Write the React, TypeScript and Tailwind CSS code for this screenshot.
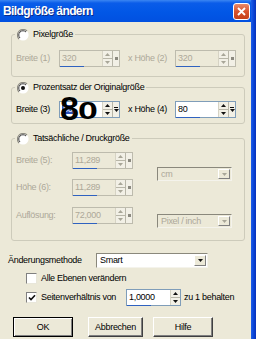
import React from "react";

const txt = "[font-family:'Liberation_Sans',Arial,sans-serif] text-[9px] tracking-[-0.3px] leading-none";

function Radio({ checked }: { checked?: boolean }) {
  return (
    <svg width="12" height="12" viewBox="0 0 12 12" className="shrink-0">
      <circle cx="6" cy="6" r="5.6" fill="#fff" />
      <path d="M2 10 A5.66 5.66 0 0 1 10 2" stroke="#8c8a80" strokeWidth="1.2" fill="none" />
      <path d="M3 9 A4.24 4.24 0 0 1 9 3" stroke="#3c3c3c" strokeWidth="1" fill="none" />
      {checked && <circle cx="6" cy="6" r="2" fill="#111" />}
    </svg>
  );
}

function Check({ checked }: { checked?: boolean }) {
  return (
    <div className="w-[11px] h-[11px] shrink-0 bg-white border border-t-[#808080] border-l-[#808080] border-r-[#e8e6da] border-b-[#e8e6da] flex items-center justify-center">
      {checked && (
        <svg width="8" height="8" viewBox="0 0 8 8">
          <path d="M1 3.5 L3 5.6 L7 1.2" stroke="#111" strokeWidth="1.6" fill="none" />
        </svg>
      )}
    </div>
  );
}

function Arrow({ up, dim }: { up?: boolean; dim?: boolean }) {
  return (
    <svg width="5" height="3" viewBox="0 0 5 3">
      <path d={up ? "M0 3 L2.5 0 L5 3 Z" : "M0 0 L2.5 3 L5 0 Z"} fill={dim ? "#a8a698" : "#111"} />
    </svg>
  );
}

function SpinBox({
  value,
  disabled,
  className,
  extra = true,
  selected,
}: {
  value: string;
  disabled?: boolean;
  className: string;
  extra?: boolean;
  selected?: boolean;
}) {
  return (
    <div
      className={`flex h-[17px] shrink-0 border ${
        disabled ? "border-[#bdbbad] bg-[#ECE9D8]" : "border-[#7F9DB9] bg-white"
      } ${className}`}
    >
      <div className="relative flex-1 flex items-center pl-[2px]">
        {selected ? (
          <span className="bg-[#2e4fb8] text-white px-[1px]">{value}</span>
        ) : (
          <span className={disabled ? "text-[#ACA899]" : "text-black"}>{value}</span>
        )}
        <div className="absolute bottom-[-1px] left-0 h-[1px] w-[56%] bg-[#2f62c0]" />
      </div>
      <div className="w-[10px] flex flex-col border-l border-[#d6d3c4]">
        <div className="flex-1 flex items-center justify-center bg-[#f2f0e6] border-b border-[#b8b6a8]">
          <Arrow up dim={disabled} />
        </div>
        <div className="flex-1 flex items-center justify-center bg-[#f2f0e6]">
          <Arrow dim={disabled} />
        </div>
      </div>
      {extra && (
        <div className="w-[7px] flex flex-col items-center justify-center gap-[1px] bg-[#f2f0e6] border-l border-[#b8b6a8]">
          {disabled ? (
            <div className="w-[3px] h-[3px] bg-[#8c8a80]" />
          ) : (
            <>
              <div className="w-[4px] h-[1px] bg-[#111]" />
              <Arrow />
            </>
          )}
        </div>
      )}
    </div>
  );
}

function Combo({
  value,
  disabled,
  className,
}: {
  value: string;
  disabled?: boolean;
  className: string;
}) {
  return (
    <div
      className={`flex shrink-0 border border-t-[#8a887c] border-l-[#8a887c] border-r-[#f4f3ec] border-b-[#f4f3ec] ${
        disabled ? "bg-[#ECE9D8]" : "bg-white"
      } ${className}`}
    >
      <div className={`flex-1 flex items-center pl-[3px] ${disabled ? "text-[#ACA899]" : "text-black"}`}>
        {value}
      </div>
      <div className="w-[12px] m-[1px] flex items-center justify-center bg-[#ECE9D8] border border-t-[#fff] border-l-[#fff] border-r-[#808080] border-b-[#808080]">
        <Arrow dim={disabled} />
      </div>
    </div>
  );
}

function Group({
  label,
  checked,
  children,
  className,
}: {
  label: string;
  checked?: boolean;
  children: React.ReactNode;
  className: string;
}) {
  return (
    <div className={`relative border border-[#cdcbbb] rounded-[3px] pl-[4px] ${className}`}>
      <div className="absolute left-[3px] top-[-7px] h-[13px] px-[2px] flex items-center gap-[4px] bg-[#ECE9D8] text-black">
        <Radio checked={checked} />
        <span>{label}</span>
      </div>
      {children}
    </div>
  );
}

function Button({ label, def, className }: { label: string; def?: boolean; className: string }) {
  return (
    <div
      className={`h-[20px] flex items-center justify-center bg-[#ECE9D8] text-black ${
        def
          ? "border border-black shadow-[inset_1px_1px_0_#fff,inset_-1px_-1px_0_#808080]"
          : "border border-t-[#fff] border-l-[#fff] border-r-[#404040] border-b-[#404040] shadow-[inset_-1px_-1px_0_#808080]"
      } ${className}`}
    >
      {label}
    </div>
  );
}

export default function App() {
  return (
    <div className={`w-[256px] h-[339px] flex overflow-hidden bg-[#ECE9D8] ${txt}`}>
      <div className="flex-1 flex flex-col">
        <div className="h-[22px] shrink-0 flex items-center justify-between pl-[3px] pr-[1px] bg-[linear-gradient(180deg,#3b86f2_0%,#0a5ce9_14%,#0157e6_55%,#0150e0_100%)]">
          <span className="text-white font-bold text-[12px] tracking-[-0.6px] [text-shadow:1px_1px_0_#0a2a8a]">
            Bildgröße ändern
          </span>
          <div className="w-[17px] h-[17px] rounded-[3px] border border-white bg-[linear-gradient(180deg,#ea8a68_0%,#d8532d_50%,#c54018_100%)] flex items-center justify-center">
            <svg width="9" height="9" viewBox="0 0 9 9">
              <path d="M1 1 L8 8 M8 1 L1 8" stroke="#fff" strokeWidth="1.8" />
            </svg>
          </div>
        </div>

        <div className="flex-1 flex flex-col pl-[11px] pr-[6px]">
          <Group label="Pixelgröße" className="mt-[12px] pt-[15px] pb-[9px]">
            <div className="flex items-center">
              <span className="w-[43px] text-[#ACA899]">Breite (1)</span>
              <SpinBox value="320" disabled className="w-[61px]" />
              <span className="ml-[8px] w-[47px] text-[#ACA899]">x Höhe (2)</span>
              <SpinBox value="320" disabled className="w-[61px]" />
            </div>
          </Group>

          <Group label="Prozentsatz der Originalgröße" checked className="mt-[10px] pt-[13px] pb-[5px]">
            <div className="flex items-center">
              <span className="w-[43px]">Breite (3)</span>
              <div className="relative">
                <SpinBox value="80" selected className="w-[61px]" />
                <div className="absolute left-[1px] top-[-6px] h-[26px] flex items-end font-bold text-black text-[34px] leading-[26px]">
                  <span className="tracking-[-1px]">8</span>
                  <span className="inline-block scale-x-[1.05] scale-y-[0.7] origin-[0_21px]">0</span>
                </div>
              </div>
              <span className="ml-[8px] w-[47px]">x Höhe (4)</span>
              <SpinBox value="80" className="w-[61px]" />
            </div>
          </Group>

          <Group label="Tatsächliche / Druckgröße" className="mt-[14px] pt-[13px] pb-[12px]">
            <div className="flex">
              <div className="flex flex-col">
                <div className="flex items-center">
                  <span className="w-[56px] text-[#ACA899]">Breite (5):</span>
                  <SpinBox value="11,289" disabled className="w-[61px]" />
                </div>
                <div className="flex items-center mt-[10px]">
                  <span className="w-[56px] text-[#ACA899]">Höhe (6):</span>
                  <SpinBox value="11,289" disabled className="w-[61px]" />
                </div>
                <div className="flex items-center mt-[11px]">
                  <span className="w-[56px] text-[#ACA899]">Auflösung:</span>
                  <SpinBox value="72,000" disabled className="w-[61px]" />
                </div>
              </div>
              <div className="ml-[24px] flex flex-col pt-[15px] gap-[33px]">
                <Combo value="cm" disabled className="w-[75px] h-[14px]" />
                <Combo value="Pixel / inch" disabled className="w-[75px] h-[14px]" />
              </div>
            </div>
          </Group>

          <div className="flex items-center mt-[12px] -ml-[3px]">
            <span className="w-[88px]">Änderungsmethode</span>
            <Combo value="Smart" className="w-[112px] h-[15px]" />
          </div>

          <div className="flex items-center mt-[5px] ml-[15px]">
            <Check />
            <span className="ml-[4px]">Alle Ebenen verändern</span>
          </div>

          <div className="flex items-center mt-[5px] ml-[15px]">
            <Check checked />
            <span className="ml-[4px] w-[85px] whitespace-nowrap">Seitenverhältnis von</span>
            <SpinBox value="1,0000" className="w-[55px]" extra={false} />
            <span className="ml-[3px] whitespace-nowrap">zu 1 behalten</span>
          </div>

          <div className="flex items-center mt-[11px] ml-[2px]">
            <Button label="OK" def className="w-[60px]" />
            <Button label="Abbrechen" className="ml-[15px] w-[55px]" />
            <Button label="Hilfe" className="ml-[10px] w-[60px]" />
          </div>
        </div>
      </div>
      <div className="w-[5px] shrink-0 bg-[linear-gradient(90deg,#1d5ee6_0%,#0a45d8_50%,#0831b8_100%)]" />
    </div>
  );
}
